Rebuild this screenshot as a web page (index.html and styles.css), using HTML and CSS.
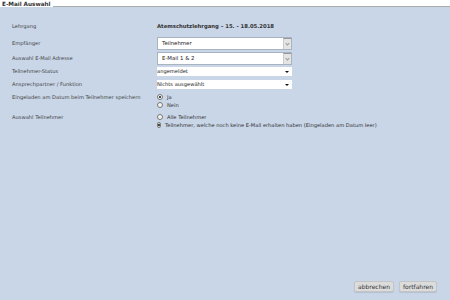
FILE: index.html
```html
<!DOCTYPE html>
<html lang="de">
<head>
    <meta charset="UTF-8">
    <title>E-Mail Auswahl</title>
    <link rel="stylesheet" href="styles.css">
</head>
<body>
    <div class="header">
        <span class="title">E-Mail Auswahl</span>
        <span class="rule"></span>
    </div>

    <div class="panel">
        <div class="form">
            <div class="label row-lehrgang">Lehrgang</div>
            <div class="value row-lehrgang"><strong>Atemschutzlehrgang – 15. - 18.05.2018</strong></div>

            <div class="label row-big">Empfänger</div>
            <div class="value row-big">
                <div class="select big">
                    <span>Teilnehmer</span>
                    <span class="drop"><span class="chev"></span></span>
                </div>
            </div>

            <div class="label row-big">Auswahl E-Mail Adresse</div>
            <div class="value row-big">
                <div class="select big">
                    <span>E-Mail 1 &amp; 2</span>
                    <span class="drop"><span class="chev"></span></span>
                </div>
            </div>

            <div class="label row-small">Teilnehmer-Status</div>
            <div class="value row-small">
                <div class="select small">
                    <span>angemeldet</span>
                    <span class="tri"></span>
                </div>
            </div>

            <div class="label row-small">Ansprechpartner / Funktion</div>
            <div class="value row-small">
                <div class="select small">
                    <span>Nichts ausgewählt</span>
                    <span class="tri"></span>
                </div>
            </div>

            <div class="label row-radio">Eingeladen am Datum beim Teilnehmer speichern</div>
            <div class="value row-radio">
                <label class="radio"><span class="dot checked"></span>Ja</label>
                <label class="radio"><span class="dot"></span>Nein</label>
            </div>

            <div class="label row-radio second">Auswahl Teilnehmer</div>
            <div class="value row-radio second">
                <label class="radio"><span class="dot"></span>Alle Teilnehmer</label>
                <label class="radio"><span class="dot checked"></span>Teilnehmer, welche noch keine E-Mail erhalten haben (Eingeladen am Datum leer)</label>
            </div>
        </div>

        <div class="actions">
            <button class="btn">abbrechen</button>
            <button class="btn">fortfahren</button>
        </div>
    </div>
</body>
</html>
```

FILE: styles.css
```css
html, body {
    margin: 0;
    height: 100%;
}

body {
    font-family: "DejaVu Sans", Verdana, sans-serif;
    font-size: 5.15px;
    background-color: #fff;
    display: flex;
    flex-direction: column;
    color: #333;
}

.header {
    display: flex;
    align-items: flex-end;
    height: 7px;
    padding-left: 2px;
}

.title {
    font-weight: bold;
    font-size: 5.7px;
    line-height: 8px;
    color: #333;
    margin-bottom: -1px;
}

.rule {
    flex: 1;
    border-bottom: 1px solid #aaa;
    margin-left: 2px;
}

.panel {
    flex: 1;
    background-color: #c9d6e8;
    display: flex;
    flex-direction: column;
    padding: 14px 13px 8px 12px;
}

.form {
    display: grid;
    grid-template-columns: 145px 135px;
    align-items: start;
}

.label {
    color: #444;
}

.row-lehrgang {
    line-height: 10px;
    margin-bottom: 6px;
}

.row-lehrgang strong {
    color: #333;
    font-size: 5.3px;
}

.row-big {
    line-height: 13px;
    margin-bottom: 2px;
}

.row-small {
    line-height: 9px;
    margin-bottom: 4px;
}

.row-radio {
    line-height: 8px;
}

.row-radio.second {
    margin-top: 4px;
}

.select {
    display: flex;
    align-items: center;
    justify-content: space-between;
    background-color: #fff;
    color: #222;
}

.select.big {
    height: 13px;
    box-sizing: border-box;
    border: 1px solid #a9b3c0;
    padding-left: 4px;
    font-size: 5.4px;
}

.drop {
    display: flex;
    align-items: center;
    justify-content: center;
    width: 8px;
    height: 11px;
    background-color: #e4e4e4;
    border-left: 1px solid #ccc;
    border-top: 1px solid #999;
    box-sizing: border-box;
}

.chev {
    width: 2px;
    height: 2px;
    border-right: 1px solid #999;
    border-bottom: 1px solid #999;
    transform: rotate(45deg);
    margin-top: -2px;
}

.select.small {
    height: 9px;
    line-height: 9px;
    padding-right: 3px;
}

.tri {
    width: 0;
    height: 0;
    border-left: 2px solid transparent;
    border-right: 2px solid transparent;
    border-top: 2px solid #111;
}

.radio {
    display: flex;
    align-items: center;
    gap: 4px;
    color: #333;
    white-space: nowrap;
}

.dot {
    width: 6px;
    height: 6px;
    box-sizing: border-box;
    border: 1px solid #777;
    border-radius: 50%;
    background-color: #f4f4f4;
    display: flex;
    align-items: center;
    justify-content: center;
}

.dot.checked::after {
    content: "";
    width: 2px;
    height: 2px;
    border-radius: 50%;
    background-color: #111;
}

.actions {
    margin-top: auto;
    display: flex;
    justify-content: flex-end;
    gap: 5px;
}

.btn {
    font-family: "DejaVu Sans", Verdana, sans-serif;
    font-size: 6px;
    color: #333;
    background-color: #dcdcdc;
    border: 1px solid #c4c4c4;
    border-radius: 2px;
    padding: 0 3px;
    height: 11px;
    line-height: 9px;
    box-shadow: 0 1px 1px rgba(0, 0, 0, 0.1);
}
```
